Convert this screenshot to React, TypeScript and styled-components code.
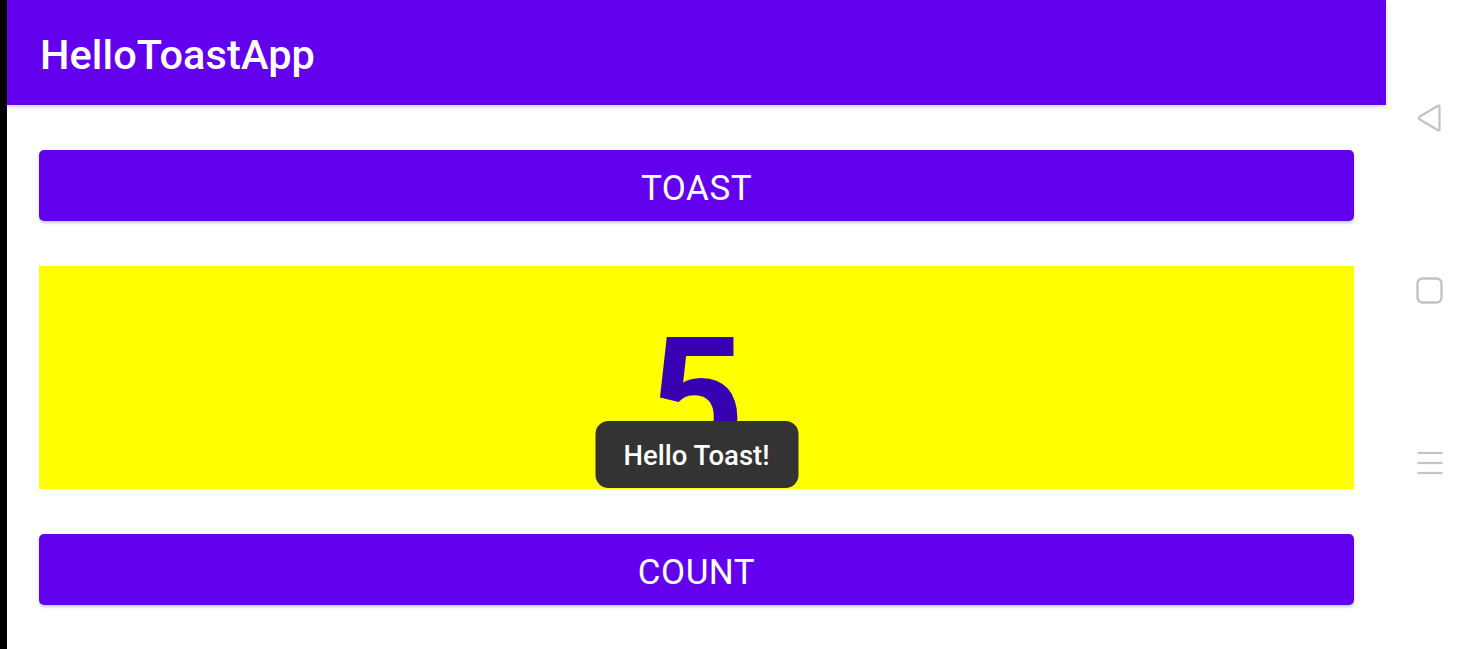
import React, { useState } from "react";
import styled, { createGlobalStyle } from "styled-components";

const GlobalStyle = createGlobalStyle`
  html, body {
    margin: 0;
    padding: 0;
    background: #ffffff;
    font-family: Roboto, "Noto Sans", Arial, sans-serif;
  }
`;

const Screen = styled.div`
  display: flex;
  width: 1473px;
  height: 649px;
  overflow: hidden;
  background: #ffffff;
`;

const Notch = styled.div`
  width: 7px;
  background: #000000;
`;

const Main = styled.div`
  position: relative;
  width: 1379px;
  display: flex;
  flex-direction: column;
`;

const AppBar = styled.header`
  height: 105px;
  flex-shrink: 0;
  background: #6200ee;
  display: flex;
  align-items: center;
  padding: 3px 0 0 33px;
  box-sizing: border-box;
  box-shadow: 0 2px 4px rgba(0, 0, 0, 0.18);
  position: relative;
  z-index: 1;
`;

const Title = styled.h1`
  margin: 0;
  color: #ffffff;
  font-size: 41.5px;
  font-weight: 500;
  letter-spacing: 0.1px;
`;

const Content = styled.div`
  display: flex;
  flex-direction: column;
  gap: 45px;
  padding: 45px 32px;
`;

const ActionButton = styled.button`
  height: 71px;
  border: none;
  border-radius: 5px;
  background: #6200ee;
  color: #ffffff;
  font-family: Roboto, Arial, sans-serif;
  font-size: 35px;
  font-weight: 400;
  letter-spacing: 0.5px;
  box-shadow: 0 2px 3px rgba(0, 0, 0, 0.22);
  padding: 5px 0 0;
  cursor: pointer;
`;

const CountPanel = styled.div`
  height: 223px;
  background: #ffff00;
  display: flex;
  align-items: center;
  justify-content: center;
`;

const CountText = styled.span`
  color: #3700b3;
  font-size: 167px;
  font-weight: 700;
  line-height: 1;
  margin-top: 44px;
`;

const Toast = styled.div`
  position: absolute;
  left: 50%;
  top: 421px;
  transform: translateX(-50%);
  width: 203px;
  height: 67px;
  border-radius: 13px;
  background: #333333;
  color: #ffffff;
  display: flex;
  align-items: center;
  justify-content: center;
  font-size: 27.5px;
  font-weight: 500;
  padding-top: 2px;
  box-sizing: border-box;
`;

const NavBar = styled.nav`
  width: 87px;
  display: flex;
  flex-direction: column;
  align-items: center;
  padding-top: 104px;
  box-sizing: border-box;
`;

const NavIcon = styled.svg<{ $mt: number }>`
  margin-top: ${(p) => p.$mt}px;
  display: block;
`;

export default function App() {
  const [count, setCount] = useState(5);
  const [showToast, setShowToast] = useState(true);

  return (
    <>
      <GlobalStyle />
      <Screen>
        <Notch />
        <Main>
          <AppBar>
            <Title>HelloToastApp</Title>
          </AppBar>
          <Content>
            <ActionButton onClick={() => setShowToast(true)}>TOAST</ActionButton>
            <CountPanel>
              <CountText>{count}</CountText>
            </CountPanel>
            <ActionButton onClick={() => setCount(count + 1)}>COUNT</ActionButton>
          </Content>
          {showToast && <Toast>Hello Toast!</Toast>}
        </Main>
        <NavBar>
          <NavIcon $mt={0} width="28" height="28" viewBox="0 0 28 28">
            <path
              d="M23.5 2.5 L23.5 25.5 Q23.5 27 22 26.2 L3.5 15.2 Q2.2 14 3.5 12.8 L22 1.8 Q23.5 1 23.5 2.5 Z"
              fill="none"
              stroke="#c2c2c2"
              strokeWidth="2.2"
              strokeLinejoin="round"
            />
          </NavIcon>
          <NavIcon $mt={145} width="27" height="27" viewBox="0 0 27 27">
            <rect x="1.5" y="1.5" width="24" height="24" rx="5" fill="none" stroke="#c2c2c2" strokeWidth="2.4" />
          </NavIcon>
          <NavIcon $mt={146} width="26" height="26" viewBox="0 0 26 26">
            <g stroke="#c4c4c4" strokeWidth="2.2">
              <line x1="0.5" y1="3" x2="25.5" y2="3" />
              <line x1="0.5" y1="13" x2="25.5" y2="13" />
              <line x1="0.5" y1="23" x2="25.5" y2="23" />
            </g>
          </NavIcon>
        </NavBar>
      </Screen>
    </>
  );
}
